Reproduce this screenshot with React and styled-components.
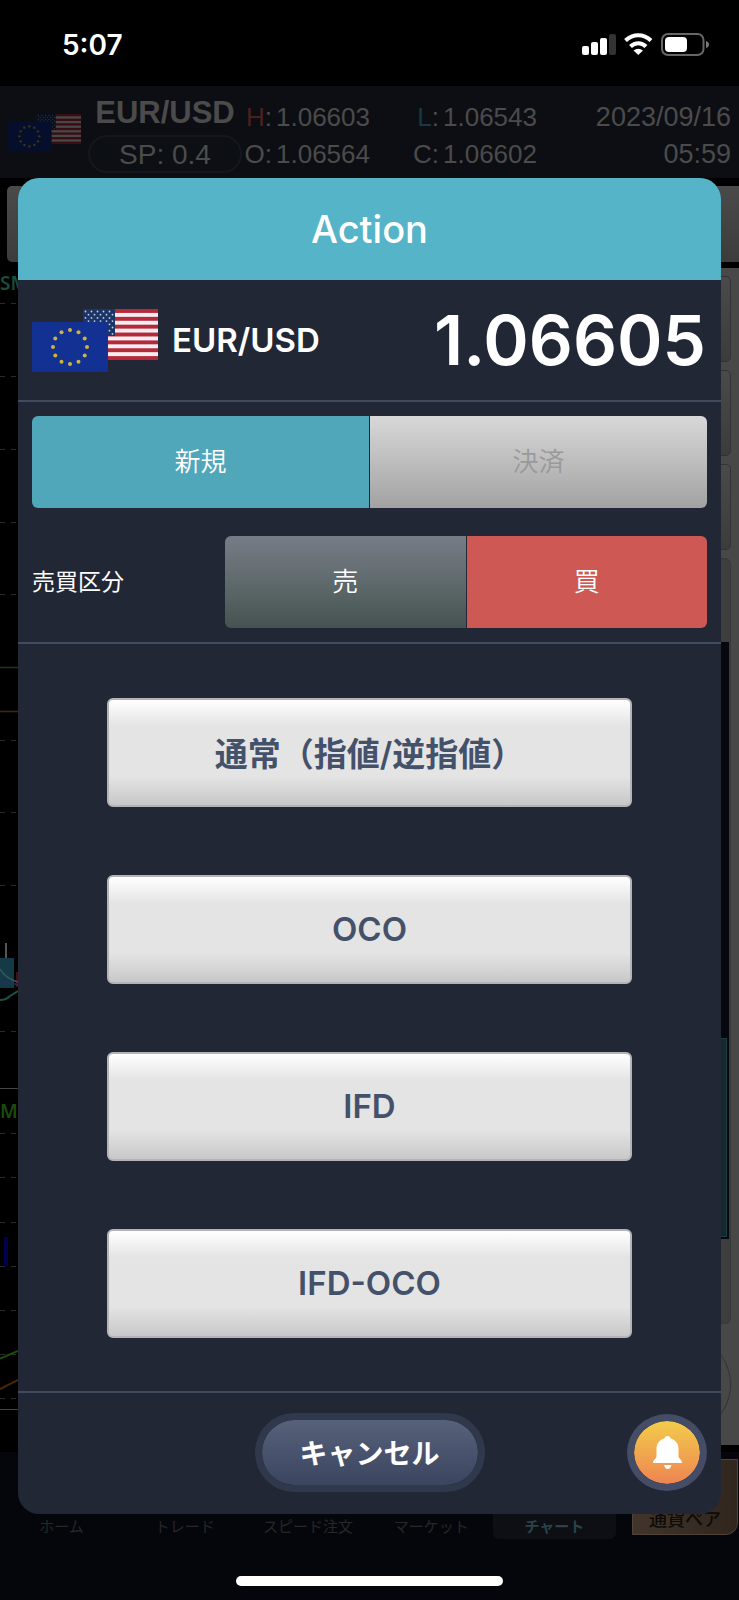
import { useState } from "react";
import styled, { createGlobalStyle } from "styled-components";

const QUOTES = [
    { label: "H", value: "1.06603", color: "#4a2020" },
    { label: "L", value: "1.06543", color: "#143a45" },
    { label: "O", value: "1.06564" },
    { label: "C", value: "1.06602" },
];

const ORDER_TYPES = ["通常（指値/逆指値）", "OCO", "IFD", "IFD-OCO"];

const TABS = ["ホーム", "トレード", "スピード注文", "マーケット", "チャート"];

const DASHES = [303, 376, 449, 522, 594, 740, 812, 885, 1031, 1133, 1177, 1222, 1266, 1310, 1354, 1398];

const STARS = Array.from({ length: 12 }, (_, i) => {
    const angle = (i * Math.PI) / 6;
    return { x: 38 + 17 * Math.sin(angle), y: 38 - 17 * Math.cos(angle) };
});

function Flags({ width, dim }) {
    return (
        <FlagsSvg width={width} height={width / 2} viewBox="0 0 126 63" $dim={dim} aria-hidden="true">
            <rect x="51" width="75" height="51" fill="#f4eef2" />
            {[0, 1, 2, 3, 4, 5, 6].map((i) => (
                <rect key={i} x="51" y={i * 7.85} width="75" height="3.92" fill="#b52a3a" />
            ))}
            <rect x="51" width="32" height="27" fill="#1c3568" />
            {[0, 1, 2, 3, 4, 5, 6, 7].map((row) =>
                [0, 1, 2, 3, 4].map((col) => (
                    <circle key={`${row}-${col}`} cx={53.5 + col * 6 + (row % 2) * 3} cy={2.5 + row * 3.2} r="0.9" fill="#c3cede" />
                ))
            )}
            <rect y="13" width="76" height="50" fill="#123193" />
            {STARS.map((star, i) => (
                <circle key={i} cx={star.x} cy={star.y} r="2" fill="#cdb43c" />
            ))}
        </FlagsSvg>
    );
}

function StatusIcons() {
    return (
        <svg width="127" height="23" viewBox="0 0 127 23" aria-hidden="true">
            <g fill="#fff">
                <rect x="0" y="13" width="7" height="9" rx="2" />
                <rect x="9" y="9" width="7" height="13" rx="2" />
                <rect x="18" y="5" width="7" height="17" rx="2" />
                <rect x="27" y="1" width="7" height="21" rx="2" fill="#333" />
            </g>
            <g fill="none" stroke="#fff" strokeWidth="4">
                <path d="M43.500 7.500C51 0.500 61.500 0.500 69 7.500" />
                <path d="M48.500 13.500C53 9 59.500 9 64 13.500" />
            </g>
            <path d="M51.500 17.500Q56.300 14 61 17.500L56.300 22Z" fill="#fff" />
            <rect x="80" y="1" width="41.500" height="21" rx="6" fill="none" stroke="#666" strokeWidth="2" />
            <rect x="83" y="4" width="22" height="15" rx="4" fill="#fff" />
            <path d="M124 8Q127 9 127 11.500T124 15Z" fill="#777" />
        </svg>
    );
}

function ChartEdge() {
    return (
        <svg width="18" height="1190" viewBox="0 262 18 1190" aria-hidden="true">
            {DASHES.map((y) => (
                <path key={y} d={`M0 ${y + 0.5}h5M11 ${y + 0.5}h5`} stroke="#2a2a2a" />
            ))}
            <path d="M0 667.500h18" stroke="#1c3a18" strokeWidth="1.5" />
            <path d="M0 711.500h18" stroke="#4a2404" strokeWidth="1.5" />
            <path d="M6 943v15" stroke="#555" strokeWidth="2" />
            <rect x="0" y="958" width="14" height="30" fill="#143a45" />
            <rect x="16" y="972" width="2" height="15" fill="#4c0b12" />
            <path d="M0 969Q6 979 18 982" fill="none" stroke="#31565c" strokeWidth="1.5" />
            <path d="M0 983Q8 981 18 985" fill="none" stroke="#24325c" strokeWidth="1.5" />
            <path d="M0 1000Q6 1000 10 996L18 991" fill="none" stroke="#1b5144" strokeWidth="2" />
            <path d="M0 1088.500h18M0 1409.500h18" stroke="#444" />
            <rect x="4" y="1237" width="4" height="29" fill="#00004c" />
            <path d="M0 1358.500L18 1351" stroke="#1b4c0c" strokeWidth="2" />
            <path d="M0 1389L18 1380" stroke="#4c2606" strokeWidth="2" />
            <ChartLabel x="0" y="290" fill="#1b4c3c">SM</ChartLabel>
            <ChartLabel x="0" y="1118" fill="#1b4c0c">MA</ChartLabel>
        </svg>
    );
}

function BellIcon() {
    return (
        <svg width="29" height="33" viewBox="0 0 29 33" fill="#fff" aria-hidden="true">
            <circle cx="14.500" cy="3" r="3" />
            <path d="M14.500 2C20.500 2 25.500 6.500 25.500 12.500V20C25.500 22.500 29 23.500 29 27H0C0 23.500 3.500 22.500 3.500 20V12.500C3.500 6.500 8.500 2 14.500 2Z" />
            <path d="M11 29H18.500Q17.500 33 14.700 33T11 29Z" />
        </svg>
    );
}

export default function App() {
    const [mode, setMode] = useState("new");
    const [side, setSide] = useState("buy");

    return (
        <>
            <GlobalStyle />
            <StatusBar>
                <Clock>5:07</Clock>
                <StatusIcons />
            </StatusBar>

            <Stage>
                <Backdrop aria-hidden="true">
                    <QuoteBar>
                        <Flags width={74} dim />
                        <PairBox>
                            <PairName>EUR/USD</PairName>
                            <Spread>SP: 0.4</Spread>
                        </PairBox>
                        <QuoteGrid>
                            {QUOTES.map((quote) => (
                                <Quote key={quote.label}>
                                    <QuoteLabel><Tint $color={quote.color}>{quote.label}</Tint>:</QuoteLabel>
                                    {quote.value}
                                </Quote>
                            ))}
                        </QuoteGrid>
                        <Stamp>
                            <span>2023/09/16</span>
                            <span>05:59</span>
                        </Stamp>
                    </QuoteBar>
                    <Tools />
                    <Chart>
                        <ChartEdge />
                        <SidePanel>
                            <Key />
                            <Key />
                            <Key />
                            <Tray>
                                <Display>
                                    <Gauge />
                                </Display>
                            </Tray>
                            <Knob />
                        </SidePanel>
                    </Chart>
                    <TabBar>
                        {TABS.map((tab) => <Tab key={tab} $active={tab === "チャート"}>{tab}</Tab>)}
                        <PairTab>通貨ペア</PairTab>
                    </TabBar>
                </Backdrop>

                <Dialog role="dialog" aria-labelledby="dialog-title">
                    <Title id="dialog-title">Action</Title>
                    <PairRow>
                        <Flags width={126} />
                        <Pair>EUR/USD</Pair>
                        <Price>1.06605</Price>
                    </PairRow>
                    <Options>
                        <Segments>
                            <Segment $tone={mode === "new" ? "teal" : "silver"} onClick={() => setMode("new")}>新規</Segment>
                            <Segment $tone={mode === "close" ? "teal" : "silver"} onClick={() => setMode("close")}>決済</Segment>
                        </Segments>
                        <SideRow role="group" aria-labelledby="side-label">
                            <SideLabel id="side-label">売買区分</SideLabel>
                            <Segments>
                                <Segment $tone={side === "sell" ? "teal" : "slate"} onClick={() => setSide("sell")}>売</Segment>
                                <Segment $tone={side === "buy" ? "red" : "slate"} onClick={() => setSide("buy")}>買</Segment>
                            </Segments>
                        </SideRow>
                    </Options>
                    <Orders>
                        {ORDER_TYPES.map((type) => <OrderButton key={type}>{type}</OrderButton>)}
                    </Orders>
                    <Actions>
                        <Cancel>キャンセル</Cancel>
                        <Alarm aria-label="アラート">
                            <BellIcon />
                        </Alarm>
                    </Actions>
                </Dialog>
            </Stage>

            <HomeArea>
                <HomeBar />
            </HomeArea>
        </>
    );
}

const GlobalStyle = createGlobalStyle`
    * {
        box-sizing: border-box;
    }

    body {
        margin: 0;
        background: #05060b;
        font-family: Inter, "Noto Sans CJK JP", sans-serif;
        color: #fff;
    }

    button {
        margin: 0;
        padding: 0;
        border: 0;
        font-family: inherit;
        color: inherit;
        cursor: pointer;
    }

    svg {
        display: block;
        flex-shrink: 0;
    }
`;

const StatusBar = styled.header`
    display: flex;
    align-items: center;
    justify-content: space-between;
    height: 86px;
    padding: 3px 30px 0 62px;
    background: #000;
`;

const Clock = styled.span`
    font-size: 28px;
    font-weight: 600;
`;

const FlagsSvg = styled.svg`
    filter: ${({ $dim }) => ($dim ? "brightness(0.3)" : "none")};
`;

/* the dialog and the dimmed page share one grid cell */
const Stage = styled.main`
    display: grid;
    grid-template-columns: minmax(0, 1fr);

    > * {
        grid-area: 1 / 1;
    }
`;

const Backdrop = styled.div`
    display: flex;
    flex-direction: column;
    background: #000;
    color: #4b4b4b;
    overflow: hidden;
`;

const QuoteBar = styled.div`
    display: flex;
    align-items: center;
    height: 92px;
    padding: 0 8px 0 7px;
    background: #0d0e14;
    font-family: "Liberation Sans", sans-serif;
    font-size: 26px;
    line-height: 37px;
`;

const PairBox = styled.div`
    display: flex;
    flex-direction: column;
    align-items: center;
    width: 154px;
    margin: 0 6px 0 7px;
`;

const PairName = styled.span`
    font-size: 31px;
    font-weight: 700;
    line-height: 44px;
`;

const Spread = styled.span`
    width: 100%;
    height: 38px;
    border: 2px solid #15171c;
    border-radius: 19px;
    background: #0c1015;
    font-size: 28px;
    line-height: 36px;
    text-align: center;
`;

const QuoteGrid = styled.div`
    display: grid;
    grid-template-columns: 167px 122px;
    padding-top: 8px;
`;

const Quote = styled.div`
    display: flex;
    gap: 4px;
`;

const QuoteLabel = styled.span`
    width: 24px;
    display: flex;
    justify-content: flex-end;
    font-size: 26px;
`;

const Tint = styled.span`
    color: ${({ $color }) => $color || "inherit"};
`;

const Stamp = styled.div`
    display: flex;
    flex-direction: column;
    align-items: flex-end;
    margin-left: auto;
    padding-top: 8px;
    font-size: 27px;
`;

const Tools = styled.div`
    height: 76px;
    margin: 8px 0 0 7px;
    border-radius: 5px 0 0 5px;
    background: linear-gradient(#4a4a4a, #3c3c3c);
`;

const Chart = styled.div`
    display: flex;
    flex: 1;
    justify-content: space-between;
`;

const ChartLabel = styled.text`
    font-family: "Noto Sans", sans-serif;
    font-size: 19px;
    font-weight: 600;
`;

const SidePanel = styled.div`
    display: flex;
    flex-direction: column;
    gap: 8px;
    width: 126px;
    margin: 6px 0 7px;
    padding: 8px;
    background: #484848;
`;

const Key = styled.div`
    height: 86px;
    border: 1px solid #333;
    border-radius: 5px;
    background: linear-gradient(#4a4a4a, #3c3c3c);
`;

const Tray = styled.div`
    flex: 1;
    padding: 83px 1px 84px;
    border: 1px solid #383838;
    border-radius: 6px;
    background: #3e3e3e;
`;

const Display = styled.div`
    display: flex;
    align-items: flex-end;
    height: 100%;
    padding: 2px;
    background: #06080d;
`;

const Gauge = styled.div`
    width: 100%;
    height: 199px;
    border: 1px solid #173c41;
    background: #15282d;
`;

const Knob = styled.div`
    height: 105px;
    border: 1px solid #333;
    border-radius: 50%;
`;

const TabBar = styled.div`
    display: flex;
    height: 87px;
    background: #05060b;
`;

const Tab = styled.span`
    display: flex;
    flex: 1;
    align-items: flex-end;
    justify-content: center;
    border-radius: 6px;
    background: ${({ $active }) => ($active ? "#0e0f14" : "none")};
    color: ${({ $active }) => ($active ? "#29434b" : "#272727")};
    font-size: 15px;
    font-weight: ${({ $active }) => ($active ? 700 : 400)};
    line-height: 24px;
`;

const PairTab = styled.span`
    display: flex;
    align-items: flex-end;
    justify-content: center;
    width: 106px;
    margin: 7px 1px 4px 16px;
    border: 1px solid #514335;
    border-radius: 0 0 12px 0;
    background: linear-gradient(90deg, #41352b, #30261e);
    color: #0d0b08;
    font-size: 18px;
    font-weight: 500;
    line-height: 28px;
`;

const Dialog = styled.section`
    margin: 92px 18px 25px;
    border-radius: 21px;
    background: #222736;
    overflow: hidden;
`;

const Title = styled.h1`
    margin: 0;
    background: #55b4c8;
    font-size: 38px;
    font-weight: 500;
    line-height: 102px;
    text-align: center;
`;

const PairRow = styled.div`
    display: flex;
    align-items: center;
    height: 122px;
    padding: 0 15px 0 14px;
    border-bottom: 2px solid #414c5e;
`;

const Pair = styled.h2`
    margin: 0 0 0 14px;
    font-size: 33px;
    font-weight: 600;
`;

const Price = styled.strong`
    margin-left: auto;
    font-size: 69px;
    font-weight: 600;
    line-height: 80px;
`;

const Options = styled.div`
    display: grid;
    gap: 28px;
    padding: 14px;
    border-bottom: 2px solid #414c5e;
`;

const Segments = styled.div`
    display: flex;
    flex: 1;
    gap: 1px;
    border-radius: 6px;
    overflow: hidden;
`;

const TONES = {
    teal: "#50a7ba",
    silver: "linear-gradient(#d8d8d8, #a2a2a2)",
    slate: "linear-gradient(#777c86, #5f6a6d 50%, #465250)",
    red: "#cd5854",
};

const Segment = styled.button`
    flex: 1;
    height: 92px;
    padding-bottom: 6px;
    background: ${({ $tone }) => TONES[$tone]};
    color: ${({ $tone }) => ($tone === "silver" ? "#999" : "#fff")};
    font-size: 26px;
    font-weight: 350;
`;

const SideRow = styled.div`
    display: flex;
    align-items: center;
`;

const SideLabel = styled.span`
    width: 193px;
    padding-bottom: 4px;
    font-size: 23px;
`;

const Orders = styled.div`
    display: grid;
    gap: 68px;
    padding: 54px 89px 53px;
    border-bottom: 2px solid #414c5e;
`;

const OrderButton = styled.button`
    height: 109px;
    padding-bottom: 2px;
    border: 2px solid #b4b4b8;
    border-radius: 6px;
    background: linear-gradient(#fff, #e4e4e4 25%, #e4e4e4 72%, #c8c8c8);
    color: #44516a;
    font-size: 33px;
    font-weight: 600;
`;

const Actions = styled.div`
    display: grid;
    grid-template-columns: 1fr auto 1fr;
    align-items: center;
    padding: 20px 14px;
`;

const Cancel = styled.button`
    grid-column: 2;
    width: 230px;
    height: 79px;
    padding-bottom: 2px;
    border: 7px solid #30394b;
    border-radius: 40px;
    background: linear-gradient(#56617a, #3c4560) padding-box;
    font-size: 28px;
    font-weight: 700;
`;

const Alarm = styled.button`
    display: flex;
    align-items: center;
    justify-content: center;
    justify-self: end;
    width: 80px;
    height: 77px;
    border: 7px solid #444c66;
    border-radius: 50%;
    background: linear-gradient(#f3cc4b, #ee8452) padding-box;
`;

const HomeArea = styled.footer`
    display: flex;
    justify-content: center;
    padding: 37px 0 14px;
`;

const HomeBar = styled.div`
    width: 36%;
    height: 10px;
    border-radius: 5px;
    background: #fff;
`;
